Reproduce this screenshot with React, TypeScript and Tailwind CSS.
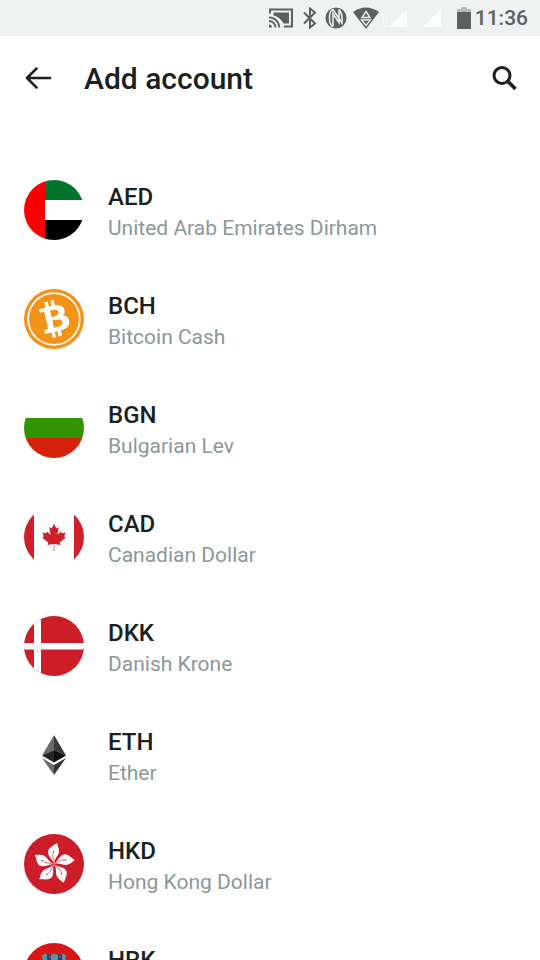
import type { ReactNode } from "react";

type Account = { code: string; name: string; icon: ReactNode };

function Disc({ id, children }: { id: string; children: ReactNode }) {
  return (
    <svg viewBox="0 0 60 60" className="size-15 shrink-0" aria-hidden="true">
      <clipPath id={id}>
        <circle cx="30" cy="30" r="30" />
      </clipPath>
      <g clipPath={`url(#${id})`}>{children}</g>
    </svg>
  );
}

const petal =
  "M0 0C-.5-4-6-7-6-12C-6-16-1-18 3-21C3.500-18 5.500-16 4.800-11.500C4.200-8 .5-6 0 0Z";

const accounts: Account[] = [
  {
    code: "AED",
    name: "United Arab Emirates Dirham",
    icon: (
      <Disc id="aed">
        <path fill="#fff" d="M0 0h60v60H0z" />
        <path fill="#04752c" d="M21 0h39v20H21z" />
        <path fill="#000" d="M21 40h39v20H21z" />
        <path fill="#fb0000" d="M0 0h21v60H0z" />
      </Disc>
    ),
  },
  {
    code: "BCH",
    name: "Bitcoin Cash",
    icon: (
      <Disc id="bch">
        <path fill="#f3931a" d="M0 0h60v60H0z" />
        <circle cx="30" cy="30" r="25.8" fill="none" stroke="#fff" strokeWidth="1.7" />
        <path
          transform="translate(30.5 30) rotate(-27) scale(2.5) translate(-12 -12)"
          fill="#fff"
          d="M17.288 10.291c.24-1.59-.974-2.45-2.64-3.03l.54-2.153-1.315-.33-.525 2.107c-.345-.087-.705-.167-1.064-.25l.526-2.127-1.32-.33-.54 2.165c-.285-.067-.565-.132-.84-.2l-1.815-.45-.35 1.407s.975.225.955.236c.535.136.63.486.615.766l-1.477 5.92c-.075.166-.24.406-.614.314.015.02-.96-.24-.96-.24l-.66 1.51 1.71.426.93.242-.54 2.19 1.32.327.54-2.17c.36.1.705.19 1.05.273l-.51 2.154 1.32.33.545-2.19c2.24.427 3.93.257 4.64-1.774.57-1.637-.03-2.58-1.217-3.196.854-.193 1.5-.76 1.68-1.93h.01zm-3.01 4.22c-.404 1.64-3.157.75-4.05.53l.72-2.9c.896.23 3.757.67 3.33 2.37zm.41-4.24c-.37 1.49-2.662.735-3.405.55l.654-2.64c.744.18 3.137.524 2.75 2.084v.006z"
        />
      </Disc>
    ),
  },
  {
    code: "BGN",
    name: "Bulgarian Lev",
    icon: (
      <Disc id="bgn">
        <path fill="#fff" d="M0 0h60v20H0z" />
        <path fill="#319400" d="M0 20h60v20H0z" />
        <path fill="#d8210c" d="M0 40h60v20H0z" />
      </Disc>
    ),
  },
  {
    code: "CAD",
    name: "Canadian Dollar",
    icon: (
      <Disc id="cad">
        <path fill="#fff" d="M0 0h60v60H0z" />
        <path fill="#d01f2a" d="M0 7.5h10v45H0zM50 7.5h10v45H50z" />
        <path
          transform="translate(30 30) scale(.0064 .0066)"
          fill="#d01f2a"
          d="m-60 2130 35-963a95 95 0 0 0-131-98l-859 151 116-320a65 65 0 0 0-20-73l-941-762 212-99a65 65 0 0 0 34-79l-186-572 542 115a65 65 0 0 0 73-38l105-247 423 454a65 65 0 0 0 111-57l-204-1052 327 189a65 65 0 0 0 91-27l332-652 332 652a65 65 0 0 0 91 27l327-189-204 1052a65 65 0 0 0 111 57l423-454 105 247a65 65 0 0 0 73 38l542-115-186 572a65 65 0 0 0 34 79l212 99-941 762a65 65 0 0 0-20 73l116 320-859-151a95 95 0 0 0-131 98l35 963z"
        />
      </Disc>
    ),
  },
  {
    code: "DKK",
    name: "Danish Krone",
    icon: (
      <Disc id="dkk">
        <path fill="#cd1d29" d="M0 0h60v60H0z" />
        <path fill="#fff" d="M10 0h7v60h-7zM0 27h60v6.500H0z" />
      </Disc>
    ),
  },
  {
    code: "ETH",
    name: "Ether",
    icon: (
      <Disc id="eth">
        <path fill="#6b6b6b" d="M30 10 18 30.500 30 25z" />
        <path fill="#3a3a3a" d="M30 10 42 30.500 30 25z" />
        <path fill="#262626" d="M30 25 18 30.500 30 37.500z" />
        <path fill="#0d0d0d" d="M30 25 42 30.500 30 37.500z" />
        <path fill="#6b6b6b" d="M18 33 30 40v10z" />
        <path fill="#343434" d="M42 33 30 40v10z" />
      </Disc>
    ),
  },
  {
    code: "HKD",
    name: "Hong Kong Dollar",
    icon: (
      <Disc id="hkd">
        <path fill="#cd1d29" d="M0 0h60v60H0z" />
        <g transform="translate(30 30)">
          {[0, 72, 144, 216, 288].map((angle) => (
            <g key={angle} transform={`rotate(${angle})`}>
              <path fill="#fff" d={petal} />
              <path fill="none" stroke="#cd1d29" strokeWidth=".6" d="M0-2C-1-6-2-8-.5-12" />
              <circle cx="-.3" cy="-12.500" r=".7" fill="#cd1d29" />
            </g>
          ))}
        </g>
      </Disc>
    ),
  },
  {
    code: "HRK",
    name: "Croatian Kuna",
    icon: (
      <Disc id="hrk">
        <path fill="#fff" d="M0 0h60v60H0z" />
        <path fill="#db1515" d="M0 0h60v20H0z" />
        <path fill="#17179a" d="M0 40h60v20H0z" />
        <path fill="#4f9aa0" d="m18 12 5-1.500 4 1.500 3-1.500 4 1.500 4-1.500 4 1.500-1 8H19z" />
        <path fill="#25387e" d="m23 10.500 4 1.500v6h-4zM34 12l4-1.500V18h-4z" />
        <path fill="#c33" d="M25 13h2v2h-2zM35 13h2v2h-2z" />
        <path fill="#fff" d="M19 19h22v16c0 14-22 14-22 0z" />
        <path fill="#db1515" d="M19 19h4v5h-4zM27 19h5v5h-5zM36 19h5v5h-5zM23 24h4v5h-4zM32 24h4v5h-4z" />
      </Disc>
    ),
  },
];

function StatusBar() {
  return (
    <div className="flex h-9 shrink-0 items-center justify-end bg-[#eef2f1] pr-3 text-[#5c605f]">
      <svg viewBox="0 0 24 20" className="h-5 w-6" fill="none" stroke="currentColor" aria-hidden="true">
        <path strokeWidth="2" d="M1 5.500V1.500h22v17h-8" />
        <path fill="currentColor" stroke="none" d="M4.500 4.500h15.500v11h-5.500C12 11 9 8.500 4.500 7.500zM0 16.500a3 3 0 0 1 3 3H0z" />
        <path strokeWidth="1.800" d="M0 13a6.500 6.500 0 0 1 6.500 6.500M0 9.300a10.200 10.200 0 0 1 10.200 10.200" />
      </svg>
      <svg viewBox="0 0 14 22" className="ml-2.5 h-5.5 w-3.5" fill="none" stroke="currentColor" strokeWidth="2" aria-hidden="true">
        <path d="m1 5.500 11 11-5 4V1.500l5 4-11 11" />
      </svg>
      <svg viewBox="0 0 22 22" className="ml-2 size-5.5" aria-hidden="true">
        <circle cx="11" cy="11" r="10.500" fill="currentColor" />
        <path fill="none" stroke="#eef2f1" strokeWidth="1.600" d="M8 19.500V6.500L14 15.500V2.500M8 19.500Q4.500 18.500 4.500 11T8 2.500L17 16Q18 7 14 2.500" />
      </svg>
      <svg viewBox="0 0 26 22" className="ml-1.5 h-5.5 w-6.5" aria-hidden="true">
        <path fill="currentColor" d="M0 5Q13-4 26 5L13 22z" />
        <path fill="none" stroke="#eef2f1" strokeWidth="1.400" d="m13 4.500 4 6H9zM8.500 13h9L13 18.500z" />
      </svg>
      <svg viewBox="0 0 24 20" className="ml-1 h-5 w-6" aria-hidden="true">
        <path fill="#fcfefd" d="M24 1v18H6z" />
        <path fill="none" stroke="#f8fbfa" d="M.5 10.500h3v8h-3z" />
      </svg>
      <svg viewBox="0 0 18 20" className="ml-4 h-5 w-4.5" aria-hidden="true">
        <path fill="#fcfefd" d="M18 1v18H0z" />
      </svg>
      <svg viewBox="0 0 14 22" className="ml-4 h-5.5 w-3.5" aria-hidden="true">
        <path fill="#b4b8b7" d="M4 0h6v2h4v4H0V2h4z" />
        <path fill="currentColor" d="M0 5h14v17H0z" />
      </svg>
      <time className="ml-1 text-[21px] leading-6 font-medium">11:36</time>
    </div>
  );
}

export default function App() {
  return (
    <div className="flex h-screen flex-col overflow-hidden bg-white font-[Roboto,sans-serif] text-[#1b1f1e]">
      <StatusBar />
      <header className="flex h-[86px] shrink-0 items-center px-6">
        <button type="button" aria-label="Back" className="shrink-0">
          <svg viewBox="0 0 28 24" className="h-6 w-7" fill="none" stroke="currentColor" strokeWidth="2.500" strokeLinecap="round" strokeLinejoin="round" aria-hidden="true">
            <path d="M26 11H3M12.500 1.500 3 11l9.500 9.500" />
          </svg>
        </button>
        <h1 className="ml-8 flex-1 text-[30px] leading-9 font-medium">Add account</h1>
        <button type="button" aria-label="Search" className="shrink-0">
          <svg viewBox="0 0 24 24" className="size-6 overflow-visible" fill="none" stroke="currentColor" aria-hidden="true">
            <circle cx="10" cy="8.500" r="8" strokeWidth="3" />
            <path strokeWidth="3.500" d="m15.500 14 8 8" />
          </svg>
        </button>
      </header>
      <main className="min-h-0 flex-1 overflow-y-auto pt-[33px] [scrollbar-width:none]">
        <ul>
          {accounts.map((account) => (
            <li key={account.code}>
              <button type="button" className="flex h-[109px] w-full items-center gap-6 px-6 text-left">
                {account.icon}
                <span className="flex min-w-0 flex-col">
                  <span className="text-2xl leading-9 font-medium">{account.code}</span>
                  <span className="text-[21px] leading-[26px] text-[#8b9799]">{account.name}</span>
                </span>
              </button>
            </li>
          ))}
        </ul>
      </main>
    </div>
  );
}
